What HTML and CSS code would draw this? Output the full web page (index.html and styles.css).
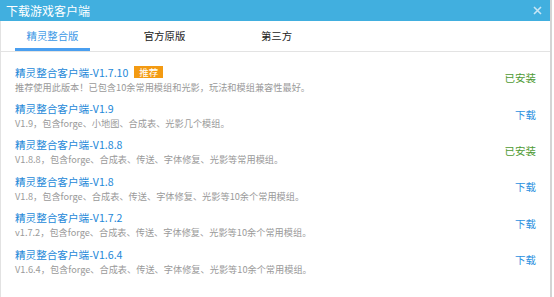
FILE: index.html
```html
<!DOCTYPE html>
<html lang="zh-CN">
  <head>
    <meta charset="UTF-8" />
    <title>下载游戏客户端</title>
    <link rel="stylesheet" href="styles.css">
  </head>
  <body>
    <div class="window">
      <!-- Title bar -->
      <div class="titlebar">
        <span class="title">下载游戏客户端</span>
        <svg class="close" width="9" height="9" viewBox="0 0 9 9">
          <path d="M1 1 L8 8 M8 1 L1 8" stroke="#c8e6f6" stroke-width="1.6" />
        </svg>
      </div>

      <!-- Tabs -->
      <div class="tabs">
        <div class="tab active">精灵整合版</div>
        <div class="tab">官方原版</div>
        <div class="tab">第三方</div>
      </div>

      <!-- Version list -->
      <ul class="list">
        <li class="item">
          <div class="info">
            <div class="name">精灵整合客户端-V1.7.10 <span class="badge">推荐</span></div>
            <div class="desc">推荐使用此版本！已包含10余常用模组和光影，玩法和模组兼容性最好。</div>
          </div>
          <span class="status installed">已安装</span>
        </li>
        <li class="item">
          <div class="info">
            <div class="name">精灵整合客户端-V1.9</div>
            <div class="desc">V1.9，包含forge、小地图、合成表、光影几个模组。</div>
          </div>
          <span class="status download">下载</span>
        </li>
        <li class="item">
          <div class="info">
            <div class="name">精灵整合客户端-V1.8.8</div>
            <div class="desc">V1.8.8，包含forge、合成表、传送、字体修复、光影等常用模组。</div>
          </div>
          <span class="status installed">已安装</span>
        </li>
        <li class="item">
          <div class="info">
            <div class="name">精灵整合客户端-V1.8</div>
            <div class="desc">V1.8，包含forge、合成表、传送、字体修复、光影等10余个常用模组。</div>
          </div>
          <span class="status download">下载</span>
        </li>
        <li class="item">
          <div class="info">
            <div class="name">精灵整合客户端-V1.7.2</div>
            <div class="desc">v1.7.2，包含forge、合成表、传送、字体修复、光影等10余个常用模组。</div>
          </div>
          <span class="status download">下载</span>
        </li>
        <li class="item">
          <div class="info">
            <div class="name">精灵整合客户端-V1.6.4</div>
            <div class="desc">V1.6.4，包含forge、合成表、传送、字体修复、光影等10余个常用模组。</div>
          </div>
          <span class="status download">下载</span>
        </li>
      </ul>
    </div>
  </body>
</html>
```

FILE: styles.css
```css
/* Download dialog */
body {
  margin: 0;
  background-color: #fff;
  font-family: "Noto Sans CJK SC", "Noto Sans", sans-serif;
}

.window {
  width: 552px;
  height: 297px;
  border-right: 2px solid #d4d4d4;
  box-sizing: border-box;
  border-left: 1px solid #e2e2e2;
}

.titlebar {
  height: 21px;
  background-color: #41afdf;
  display: flex;
  align-items: center;
  justify-content: space-between;
  padding: 0 8px 0 6px;
  margin-left: -1px;
}

.title {
  color: #fff;
  font-size: 12px;
  line-height: 21px;
}

.close {
  display: block;
}

.tabs {
  display: flex;
  gap: 37px;
  padding-left: 14px;
  border-bottom: 1px solid #e3e3e3;
  box-sizing: border-box;
  height: 31px;
}

.tab {
  width: 75px;
  font-size: 10.4px;
  color: #222;
  text-align: center;
  line-height: 30px;
  box-sizing: border-box;
}

.tab.active {
  color: #3b98e6;
  border-bottom: 3px solid #4a9ff0;
  height: 30px;
}

.list {
  list-style: none;
  margin: 0;
  padding: 9px 0 0 14px;
}

.item {
  display: flex;
  align-items: center;
  justify-content: space-between;
  padding: 3.7px 14px 3.7px 0;
}

.name {
  font-size: 10.6px;
  line-height: 15px;
  color: #2488d8;
  display: flex;
  align-items: center;
  gap: 6px;
}

.badge {
  background-color: #f39a12;
  color: #fff;
  font-size: 9.5px;
  line-height: 12px;
  padding: 0 4px;
  width: 21px;
  text-align: center;
}

.desc {
  font-size: 9.2px;
  line-height: 14px;
  color: #9a9a9a;
}

.status {
  font-size: 10.5px;
  margin-top: -3px;
}

.installed {
  color: #4e9a32;
}

.download {
  color: #2a90e0;
}
```
